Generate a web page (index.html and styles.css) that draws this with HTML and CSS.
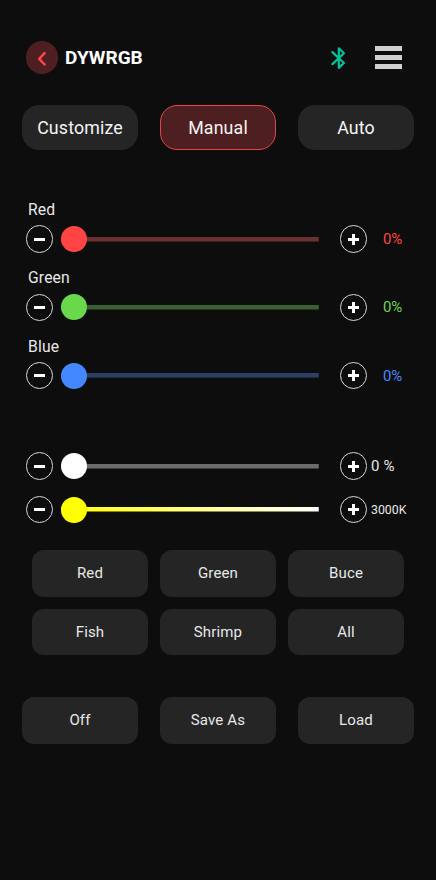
FILE: index.html
```
<!DOCTYPE html>
<html lang="en">
<head>
  <meta charset="UTF-8" />
  <meta name="viewport" content="width=device-width, initial-scale=1.0"/>
  <title>DYWRGB</title>
  <link rel="stylesheet" href="styles.css">
</head>
<body>
  <header class="header">
    <button class="back" aria-label="Back">
      <svg width="32" height="32" viewBox="0 0 32 32"><path d="M18.6 11.1L13.2 16.8l5.4 5.7" /></svg>
    </button>
    <h1>DYWRGB</h1>
    <svg class="bluetooth" width="16" height="24" viewBox="0 0 16 24"><path d="M1.4 6.1L12.9 17 7.8 21.9V2.3L12.9 7.2 1.4 18.1" /></svg>
    <button class="menu" aria-label="Menu">
      <span></span>
      <span></span>
      <span></span>
    </button>
  </header>

  <nav class="tabs">
    <button class="tab">Customize</button>
    <button class="tab active">Manual</button>
    <button class="tab">Auto</button>
  </nav>

  <section class="channels">
    <div class="channel red">
      <label for="red">Red</label>
      <div class="row">
        <button class="step minus" aria-label="Less red"></button>
        <input type="range" id="red" min="0" max="100" value="0" />
        <button class="step plus" aria-label="More red"></button>
        <span class="value">0%</span>
      </div>
    </div>
    <div class="channel green">
      <label for="green">Green</label>
      <div class="row">
        <button class="step minus" aria-label="Less green"></button>
        <input type="range" id="green" min="0" max="100" value="0" />
        <button class="step plus" aria-label="More green"></button>
        <span class="value">0%</span>
      </div>
    </div>
    <div class="channel blue">
      <label for="blue">Blue</label>
      <div class="row">
        <button class="step minus" aria-label="Less blue"></button>
        <input type="range" id="blue" min="0" max="100" value="0" />
        <button class="step plus" aria-label="More blue"></button>
        <span class="value">0%</span>
      </div>
    </div>
  </section>

  <section class="whites">
    <div class="row brightness">
      <button class="step minus" aria-label="Dimmer"></button>
      <input type="range" id="brightness" min="0" max="100" value="0" aria-label="Brightness" />
      <button class="step plus" aria-label="Brighter"></button>
      <span class="value">0 %</span>
    </div>
    <div class="row kelvin">
      <button class="step minus" aria-label="Warmer"></button>
      <input type="range" id="kelvin" min="3000" max="10000" value="3000" aria-label="Color temperature" />
      <button class="step plus" aria-label="Cooler"></button>
      <span class="value">3000K</span>
    </div>
  </section>

  <section class="presets">
    <button class="btn">Red</button>
    <button class="btn">Green</button>
    <button class="btn">Buce</button>
    <button class="btn">Fish</button>
    <button class="btn">Shrimp</button>
    <button class="btn">All</button>
  </section>

  <footer class="actions">
    <button class="btn">Off</button>
    <button class="btn">Save As</button>
    <button class="btn">Load</button>
  </footer>
</body>
</html>
```

FILE: styles.css
```
* {
  box-sizing: border-box;
}

body {
  margin: 0;
  min-height: 100vh;
  padding-top: 41px;
  background: #0d0d0d;
  color: #e8e8e8;
  font-family: Roboto, sans-serif;
  letter-spacing: 0.15px;
}

button {
  padding: 0;
  border: none;
  background: none;
  color: inherit;
  font: inherit;
  letter-spacing: inherit;
}

/* header */
.header {
  display: flex;
  align-items: center;
  height: 33px;
  padding: 0 34px 0 25.5px;
}

.back {
  width: 32.5px;
  height: 32.5px;
  border-radius: 50%;
  background: #4e1f20;
}

.back svg,
.bluetooth {
  display: block;
  fill: none;
  stroke-linecap: round;
  stroke-linejoin: round;
}

.back path {
  stroke: #ff4447;
  stroke-width: 2.5;
}

h1 {
  flex: 1;
  margin: 0 0 0 7px;
  color: #fff;
  font-size: 19px;
  font-weight: 700;
  letter-spacing: 0;
}

.bluetooth {
  margin-right: 28px;
}

.bluetooth path {
  stroke: #00c49a;
  stroke-width: 2.2;
}

.menu {
  display: flex;
  flex-direction: column;
  gap: 4px;
  width: 27px;
}

.menu span {
  height: 5px;
  background: #d0d0d0;
}

/* tabs */
.tabs {
  display: grid;
  grid-template-columns: repeat(3, 116px);
  gap: 22px;
  padding: 31px 22px 0;
}

.tab {
  height: 45px;
  border-radius: 17px;
  background: #252525;
  color: #f4f4f4;
  font-size: 17.8px;
}

.tab.active {
  border: 1.5px solid #e04649;
  background: #4e1f20;
}

/* sliders */
.channels {
  display: flex;
  flex-direction: column;
  gap: 15.3px;
  padding-top: 50px;
}

.channel label {
  display: block;
  height: 25px;
  padding-left: 28px;
  font-size: 15.7px;
  line-height: 20px;
}

.row {
  display: flex;
  align-items: center;
  height: 28px;
  padding-left: 25.5px;
}

.step {
  flex: none;
  width: 27.5px;
  height: 27.5px;
  border: 1px solid #d8d8d8;
  border-radius: 50%;
}

.minus {
  background: linear-gradient(#fff, #fff) center / 11px 3px no-repeat;
}

.plus {
  background:
    linear-gradient(#fff, #fff) center / 11px 3px no-repeat,
    linear-gradient(#fff, #fff) center / 3px 11px no-repeat;
}

input[type="range"] {
  -webkit-appearance: none;
  appearance: none;
  width: 257.5px;
  height: 26px;
  margin: 0 21px 0 8px;
  background: linear-gradient(to right, var(--track), var(--track-end, var(--track))) center / 100% 4.5px no-repeat;
}

input[type="range"]::-webkit-slider-thumb {
  -webkit-appearance: none;
  width: 26px;
  height: 26px;
  border-radius: 50%;
  background: var(--thumb);
}

.red {
  --thumb: #ff4444;
  --track: #6b3030;
}

.green {
  --thumb: #69d84a;
  --track: #3a5f31;
}

.blue {
  --thumb: #4488ff;
  --track: #2c4066;
}

.brightness {
  --thumb: #fff;
  --track: #6c6c6c;
}

.kelvin {
  --thumb: #ffff00;
  --track: #ffff00;
  --track-end: #fff;
}

.value {
  font-size: 15px;
}

.channel .value {
  margin-left: 16px;
  color: var(--thumb);
  letter-spacing: -0.1px;
}

.whites {
  display: flex;
  flex-direction: column;
  gap: 15.5px;
  padding-top: 62.5px;
}

.whites .value {
  margin-left: 4px;
}

.kelvin .value {
  font-size: 12.3px;
  letter-spacing: 0;
}

/* buttons */
.presets,
.actions {
  display: grid;
  grid-template-columns: repeat(3, 116px);
}

.presets {
  gap: 12px;
  padding: 26.5px 32px 0;
}

.actions {
  gap: 22px;
  padding: 42px 22px 0;
}

.btn {
  height: 46.5px;
  border-radius: 12px;
  background: #252525;
  font-size: 15px;
}
```
